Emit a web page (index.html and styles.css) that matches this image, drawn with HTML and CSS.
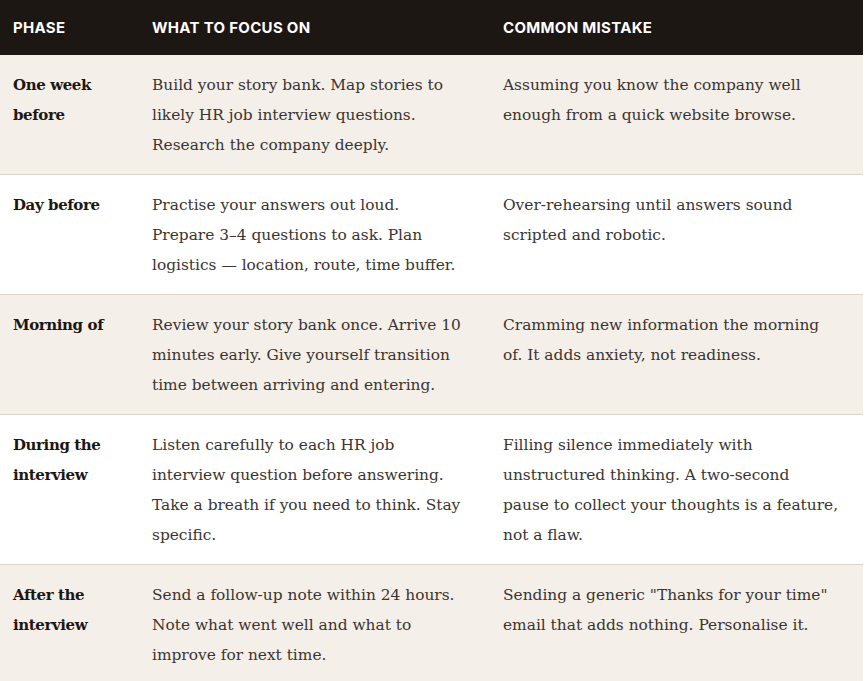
FILE: index.html
```html
<!DOCTYPE html>
<html lang="en">
<head>
<meta charset="utf-8">
<title>Interview timeline</title>
<link rel="stylesheet" href="styles.css">
</head>
<body>
<table class="plan">
  <colgroup>
    <col class="c-phase">
    <col class="c-focus">
    <col class="c-mistake">
  </colgroup>
  <thead>
    <tr>
      <th>Phase</th>
      <th>What to focus on</th>
      <th>Common mistake</th>
    </tr>
  </thead>
  <tbody>
    <tr class="alt">
      <td class="phase">One week before</td>
      <td>Build your story bank. Map stories to likely HR job interview questions. Research the company deeply.</td>
      <td>Assuming you know the company well enough from a quick website browse.</td>
    </tr>
    <tr>
      <td class="phase">Day before</td>
      <td>Practise your answers out loud. Prepare 3–4 questions to ask. Plan logistics — location, route, time buffer.</td>
      <td>Over-rehearsing until answers sound scripted and robotic.</td>
    </tr>
    <tr class="alt">
      <td class="phase">Morning of</td>
      <td>Review your story bank once. Arrive 10 minutes early. Give yourself transition time between arriving and entering.</td>
      <td>Cramming new information the morning of. It adds anxiety, not readiness.</td>
    </tr>
    <tr>
      <td class="phase">During the interview</td>
      <td>Listen carefully to each HR job interview question before answering. Take a breath if you need to think. Stay specific.</td>
      <td>Filling silence immediately with unstructured thinking. A two-second pause to collect your thoughts is a feature, not a flaw.</td>
    </tr>
    <tr class="alt">
      <td class="phase">After the interview</td>
      <td>Send a follow-up note within 24 hours. Note what went well and what to improve for next time.</td>
      <td>Sending a generic "Thanks for your time" email that adds nothing. Personalise it.</td>
    </tr>
  </tbody>
</table>
</body>
</html>
```
FILE: styles.css
```css
html, body {
  margin: 0;
  padding: 0;
  background: #ffffff;
}

.plan {
  width: 863px;
  border-collapse: collapse;
  table-layout: fixed;
  font-family: "DejaVu Serif", serif;
  font-size: 15.4px;
  line-height: 30px;
  color: #3b3430;
}

.c-phase { width: 139px; }
.c-focus { width: 351px; }
.c-mistake { width: 373px; }

.plan th {
  background: #1c1713;
  color: #ffffff;
  font-family: "Inter", "Liberation Sans", sans-serif;
  font-weight: 700;
  font-size: 15px;
  letter-spacing: 0.3px;
  text-transform: uppercase;
  text-align: left;
  height: 55px;
  padding: 0 24px 0 13px;
  box-sizing: border-box;
  vertical-align: middle;
}

.plan td {
  padding: 15px 24px 14px 13px;
  vertical-align: top;
  border-bottom: 1px solid #ddd5ca;
}

.plan tr.alt td {
  background: #f4efe8;
}

.plan td.phase {
  font-weight: 700;
  font-size: 15px;
  letter-spacing: -0.4px;
  color: #1c1713;
}
```
